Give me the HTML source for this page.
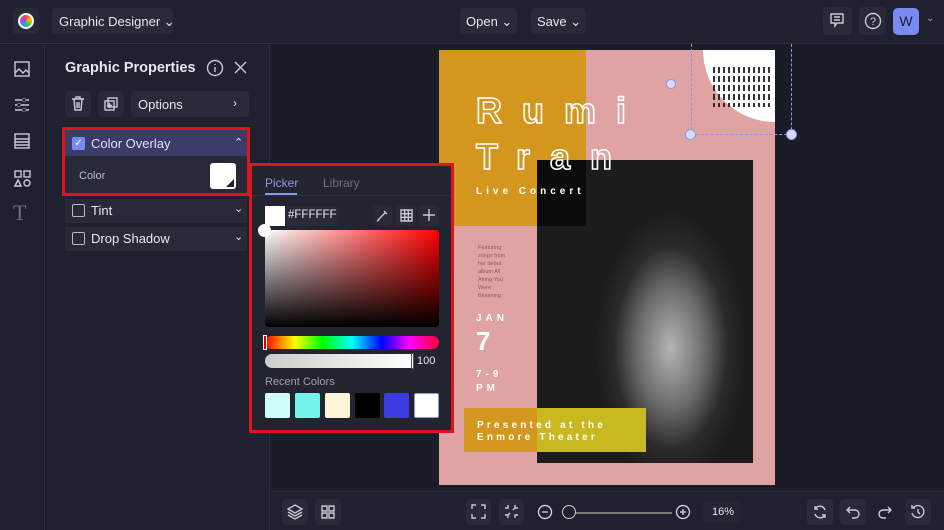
<!DOCTYPE html>
<html><head><style>
*{box-sizing:border-box;margin:0;padding:0}
body{width:944px;height:530px;overflow:hidden;background:#1a1c27;font-family:"Liberation Sans",sans-serif;color:#e6e7ee;position:relative}
.a{position:absolute}
.btn{position:absolute;background:#282a38;border-radius:4px}
.ic{stroke:#c9cad6;fill:none;stroke-width:1.4}
</style></head><body>
<!-- top bar -->
<div class="a" style="left:0;top:0;width:944px;height:44px;background:#1f2130;border-bottom:1px solid #2c2e3c"></div>
<div class="btn" style="left:13px;top:8px;width:26px;height:26px"></div>
<div class="a" style="left:18px;top:13px;width:16px;height:16px;border-radius:50%;background:conic-gradient(#e44,#fb0,#4c4,#29f,#a4e,#e44);border:2px solid #fff"></div>
<div class="btn" style="left:52px;top:8px;width:121px;height:26px"></div>
<div class="a" style="left:59px;top:14px;font-size:13px">Graphic Designer ⌄</div>
<div class="btn" style="left:460px;top:8px;width:57px;height:26px"></div>
<div class="a" style="left:466px;top:14px;font-size:13px">Open ⌄</div>
<div class="btn" style="left:531px;top:8px;width:55px;height:26px"></div>
<div class="a" style="left:537px;top:14px;font-size:13px">Save ⌄</div>
<div class="btn" style="left:823px;top:7px;width:29px;height:28px"></div>
<svg class="a" style="left:829px;top:12px" width="16" height="16"><path class="ic" d="M2 2h12v9H8l-2 3v-3H2z M5 5h6M5 8h6"/></svg>
<div class="btn" style="left:859px;top:7px;width:27px;height:28px"></div>
<svg class="a" style="left:864px;top:12px" width="18" height="18"><circle class="ic" cx="9" cy="9" r="7.5"/><text x="9" y="13" font-size="11" fill="#c9cad6" text-anchor="middle" font-family="Liberation Sans">?</text></svg>
<div class="a" style="left:893px;top:8px;width:26px;height:27px;background:#7a8af5;border-radius:5px;color:#1b1d2b;font-size:14px;text-align:center;line-height:27px">W</div>
<div class="a" style="left:926px;top:13px;font-size:10px;color:#aaa">⌄</div>

<!-- left icon column -->
<div class="a" style="left:0;top:45px;width:45px;height:485px;background:#1f2130;border-right:1px solid #2c2e3c"></div>
<svg class="a" style="left:14px;top:61px" width="16" height="16"><rect class="ic" x="1" y="1" width="14" height="14" stroke="#6d6f80"/><path class="ic" stroke="#6d6f80" d="M1 12l4-4 4 4 3-3 3 3"/></svg>
<svg class="a" style="left:14px;top:97px" width="16" height="16"><path class="ic" stroke="#6d6f80" d="M1 3h14M1 8h14M1 13h14"/><circle cx="10" cy="3" r="1.8" fill="#1f2130" stroke="#6d6f80"/><circle cx="5" cy="8" r="1.8" fill="#1f2130" stroke="#6d6f80"/><circle cx="10" cy="13" r="1.8" fill="#1f2130" stroke="#6d6f80"/></svg>
<svg class="a" style="left:14px;top:133px" width="16" height="16"><rect class="ic" x="1" y="1" width="14" height="14" stroke="#6d6f80"/><path class="ic" stroke="#6d6f80" d="M1 6h14M1 9h14M1 12h14"/></svg>
<svg class="a" style="left:14px;top:170px" width="17" height="17"><rect class="ic" x="1" y="1" width="6" height="6"/><rect class="ic" x="10" y="1" width="6" height="6"/><path class="ic" d="M4 10l3 6H1z"/><circle class="ic" cx="13" cy="13" r="3"/></svg>
<div class="a" style="left:13px;top:200px;font-size:22px;color:#6d6f80;font-family:'Liberation Serif'">T</div>

<!-- panel -->
<div class="a" style="left:46px;top:45px;width:224px;height:485px;background:#1f2130;border-right:1px solid #2c2e3c"></div>
<div class="a" style="left:65px;top:60px;font-size:14.5px;font-weight:bold">Graphic Properties</div>
<svg class="a" style="left:206px;top:59px" width="18" height="18"><circle class="ic" cx="9" cy="9" r="7.5"/><path class="ic" d="M9 8v5M9 5v1"/></svg>
<svg class="a" style="left:234px;top:61px" width="13" height="13"><path class="ic" stroke-width="1.6" d="M1 1l11 11M12 1L1 12"/></svg>
<div class="btn" style="left:65px;top:91px;width:26px;height:26px"></div>
<svg class="a" style="left:71px;top:96px" width="14" height="15"><path class="ic" d="M1 3h12M5 3V1h4v2M3 3l1 11h6l1-11M6 6v6M8 6v6"/></svg>
<div class="btn" style="left:98px;top:91px;width:26px;height:26px"></div>
<svg class="a" style="left:104px;top:97px" width="14" height="14"><rect class="ic" x="4" y="1" width="9" height="9"/><rect class="ic" x="1" y="4" width="9" height="9"/><path class="ic" d="M5.5 6v5M3 8.5h5"/></svg>
<div class="btn" style="left:131px;top:91px;width:118px;height:26px"></div>
<div class="a" style="left:138px;top:97px;font-size:13px">Options</div>
<div class="a" style="left:233px;top:96px;font-size:12px">›</div>

<div class="a" style="left:62px;top:127px;width:188px;height:69px;border:3px solid #e0141a"></div>
<div class="a" style="left:65px;top:130px;width:182px;height:26px;background:#3b3c68"></div>
<div class="a" style="left:65px;top:156px;width:182px;height:37px;background:#282a38"></div>
<div class="a" style="left:72px;top:137px;width:13px;height:13px;background:#7a8af5;border-radius:2px;color:#fff;font-size:10px;text-align:center;line-height:13px">✓</div>
<div class="a" style="left:91px;top:136px;font-size:13px;color:#dfe0f5">Color Overlay</div>
<div class="a" style="left:234px;top:136px;font-size:11px">⌃</div>
<div class="a" style="left:79px;top:170px;font-size:11px;color:#bbbccb">Color</div>
<div class="a" style="left:210px;top:163px;width:26px;height:26px;background:#fff;border-radius:3px"></div>
<div class="a" style="left:226px;top:179px;width:0;height:0;border-left:8px solid transparent;border-bottom:8px solid #222"></div>

<div class="a" style="left:65px;top:199px;width:182px;height:24px;background:#282a38"></div>
<div class="a" style="left:72px;top:204px;width:13px;height:13px;border:1.5px solid #bbb;border-radius:2px"></div>
<div class="a" style="left:91px;top:203px;font-size:13px">Tint</div>
<div class="a" style="left:234px;top:202px;font-size:11px">⌄</div>
<div class="a" style="left:65px;top:227px;width:182px;height:24px;background:#282a38"></div>
<div class="a" style="left:72px;top:232px;width:13px;height:13px;border:1.5px solid #bbb;border-radius:2px"></div>
<div class="a" style="left:91px;top:231px;font-size:13px">Drop Shadow</div>
<div class="a" style="left:234px;top:230px;font-size:11px">⌄</div>

<!-- poster -->
<div class="a" style="left:439px;top:50px;width:336px;height:435px;background:#dfa3a3"></div>
<div class="a" style="left:439px;top:50px;width:147px;height:176px;background:#d3961e"></div>
<div class="a" style="left:703px;top:50px;width:72px;height:72px;background:#fff;border-radius:0 0 0 72px"></div>
<div class="a" style="left:713px;top:67px;width:58px;height:40px;background:repeating-linear-gradient(90deg,#111 0 2px,transparent 2px 5px);opacity:.85;-webkit-mask:repeating-linear-gradient(180deg,#000 0 6px,transparent 6px 9px)"></div>
<div class="a" style="left:537px;top:160px;width:216px;height:303px;background:radial-gradient(ellipse 35% 45% at 62% 62%,#b5b5b5,#6a6a6a 45%,#2a2a2a 75%,#1c1c1c)"></div>
<div class="a" style="left:537px;top:160px;width:49px;height:66px;background:#000;opacity:.6"></div>
<div class="a" style="left:476px;top:90px;font-size:36px;font-weight:bold;color:transparent;-webkit-text-stroke:1.6px #fff;letter-spacing:20px">Rumi</div>
<div class="a" style="left:476px;top:136px;font-size:36px;font-weight:bold;color:transparent;-webkit-text-stroke:1.6px #fff;letter-spacing:20px">Tran</div>
<div class="a" style="left:476px;top:186px;font-size:10px;font-weight:bold;color:#fff;letter-spacing:4px">Live Concert</div>
<div class="a" style="left:478px;top:244px;font-size:5.5px;line-height:8px;color:#8a5a5a;width:36px">Featuring songs from her debut album All Along You Were Blooming</div>
<div class="a" style="left:476px;top:313px;font-size:10px;font-weight:bold;color:#fff;letter-spacing:4px">JAN</div>
<div class="a" style="left:476px;top:326px;font-size:26px;font-weight:bold;color:#fff">7</div>
<div class="a" style="left:476px;top:368px;font-size:10px;font-weight:bold;color:#fff;letter-spacing:4px;line-height:14px">7-9<br>PM</div>
<div class="a" style="left:464px;top:408px;width:182px;height:44px;background:#d3961e"></div>
<div class="a" style="left:537px;top:408px;width:109px;height:44px;background:#c8c020;opacity:.8"></div>
<div class="a" style="left:477px;top:420px;font-size:10px;font-weight:bold;color:#fff;letter-spacing:3.2px;line-height:12px">Presented at the<br>Enmore Theater</div>
<!-- selection -->
<div class="a" style="left:691px;top:44px;width:101px;height:91px;border-right:1.5px dashed #8d97ee;border-bottom:1.5px dashed #8d97ee;border-left:1.5px dashed #8d97ee;border-top:none"></div>
<div class="a" style="left:666px;top:79px;width:10px;height:10px;border-radius:50%;background:#d7dbff;border:1px solid #8d97ee"></div>
<div class="a" style="left:685px;top:129px;width:11px;height:11px;border-radius:50%;background:#d7dbff;border:1px solid #8d97ee"></div>
<div class="a" style="left:786px;top:129px;width:11px;height:11px;border-radius:50%;background:#d7dbff;border:1px solid #8d97ee"></div>

<!-- picker -->
<div class="a" style="left:249px;top:163px;width:205px;height:270px;border:3px solid #e0141a;background:#222430"></div>
<div class="a" style="left:265px;top:176px;font-size:12px;color:#8d97ee">Picker</div>
<div class="a" style="left:265px;top:193px;width:32px;height:2px;background:#8d97ee"></div>
<div class="a" style="left:323px;top:176px;font-size:12px;color:#6f7184">Library</div>
<div class="a" style="left:252px;top:195px;width:199px;height:1px;background:#2f3140"></div>
<div class="a" style="left:265px;top:206px;width:20px;height:20px;background:#fff"></div>
<div class="btn" style="left:285px;top:206px;width:54px;height:20px;background:#282a38"></div>
<div class="a" style="left:288px;top:209px;font-size:11.5px">#FFFFFF</div>
<div class="btn" style="left:373px;top:205px;width:19px;height:21px"></div>
<svg class="a" style="left:376px;top:209px" width="13" height="13"><path class="ic" d="M2 11l7-7M8 2l3 3M1 12l2-1"/></svg>
<div class="btn" style="left:396px;top:205px;width:20px;height:21px"></div>
<svg class="a" style="left:400px;top:209px" width="13" height="13"><path class="ic" d="M1 1h11v11H1zM1 4.7h11M1 8.3h11M4.7 1v11M8.3 1v11"/></svg>
<div class="btn" style="left:419px;top:205px;width:20px;height:21px"></div>
<svg class="a" style="left:422px;top:208px" width="14" height="14"><path class="ic" stroke-width="1.6" d="M7 1v12M1 7h12"/></svg>
<div class="a" style="left:265px;top:230px;width:174px;height:97px;border-radius:3px;background:linear-gradient(to top,#000,rgba(0,0,0,0)),linear-gradient(to right,#fff,#f00)"></div>
<div class="a" style="left:258px;top:224px;width:13px;height:13px;border-radius:50%;background:#fff"></div>
<div class="a" style="left:265px;top:336px;width:174px;height:13px;border-radius:7px;background:linear-gradient(to right,#f00,#ff0 17%,#0f0 33%,#0ff 50%,#00f 67%,#f0f 83%,#f03)"></div>
<div class="a" style="left:263px;top:335px;width:4px;height:15px;border:1px solid #fff;background:#c00"></div>
<div class="a" style="left:265px;top:354px;width:148px;height:14px;border-radius:7px 0 0 7px;background:linear-gradient(to right,#ccc,#fff)"></div>
<div class="a" style="left:411px;top:353px;width:3px;height:16px;background:#fff;border:1px solid #555"></div>
<div class="a" style="left:417px;top:355px;font-size:11px">100</div>
<div class="a" style="left:265px;top:376px;font-size:11px;color:#9ea0b2">Recent Colors</div>
<div class="a" style="left:265px;top:393px;width:25px;height:25px;background:#cffdfa;border-radius:2px"></div>
<div class="a" style="left:295px;top:393px;width:25px;height:25px;background:#74f3ea;border-radius:2px"></div>
<div class="a" style="left:325px;top:393px;width:25px;height:25px;background:#fdf5d8;border-radius:2px"></div>
<div class="a" style="left:355px;top:393px;width:25px;height:25px;background:#000;border-radius:2px"></div>
<div class="a" style="left:384px;top:393px;width:25px;height:25px;background:#3b3be0;border-radius:2px"></div>
<div class="a" style="left:414px;top:393px;width:25px;height:25px;background:#fff;border-radius:2px;border:1px solid #8d97ee"></div>

<!-- bottom bar -->
<div class="a" style="left:271px;top:491px;width:673px;height:39px;background:#1f2130;border-top:1px solid #2c2e3c"></div>
<div class="btn" style="left:282px;top:499px;width:26px;height:26px"></div>
<svg class="a" style="left:287px;top:504px" width="16" height="16"><path class="ic" d="M8 1l7 4-7 4-7-4zM1 8l7 4 7-4M1 11l7 4 7-4"/></svg>
<div class="btn" style="left:315px;top:499px;width:26px;height:26px"></div>
<svg class="a" style="left:321px;top:505px" width="14" height="14"><path class="ic" d="M1 1h5v5H1zM8 1h5v5H8zM1 8h5v5H1zM8 8h5v5H8z"/></svg>
<div class="btn" style="left:466px;top:499px;width:25px;height:26px"></div>
<svg class="a" style="left:471px;top:504px" width="15" height="15"><path class="ic" d="M1 5V1h4M10 1h4v4M14 10v4h-4M5 14H1v-4"/></svg>
<div class="btn" style="left:499px;top:499px;width:25px;height:26px"></div>
<svg class="a" style="left:504px;top:504px" width="15" height="15"><path class="ic" d="M1 4h3V1M11 1v3h3M14 11h-3v3M4 14v-3H1M6 9l-3 3M9 6l3-3"/></svg>
<svg class="a" style="left:537px;top:504px" width="16" height="16"><circle class="ic" cx="8" cy="8" r="6.5"/><path class="ic" d="M5 8h6"/></svg>
<div class="a" style="left:572px;top:512px;width:100px;height:1.5px;background:#777"></div>
<div class="a" style="left:562px;top:505px;width:14px;height:14px;border-radius:50%;border:1.5px solid #ccc;background:#1f2130"></div>
<svg class="a" style="left:675px;top:504px" width="16" height="16"><circle class="ic" cx="8" cy="8" r="6.5"/><path class="ic" d="M5 8h6M8 5v6"/></svg>
<div class="btn" style="left:703px;top:501px;width:37px;height:22px;background:#232533"></div>
<div class="a" style="left:712px;top:506px;font-size:11px">16%</div>
<div class="btn" style="left:807px;top:499px;width:26px;height:26px"></div>
<svg class="a" style="left:812px;top:504px" width="16" height="16"><path class="ic" d="M13 6A5.5 5.5 0 0 0 3 5M3 10a5.5 5.5 0 0 0 10 1M3 2v3h3M13 14v-3h-3"/></svg>
<div class="btn" style="left:840px;top:499px;width:26px;height:26px"></div>
<svg class="a" style="left:845px;top:504px" width="16" height="16"><path class="ic" d="M5 3L2 6l3 3M2 6h8a4 4 0 0 1 0 8H7"/></svg>
<svg class="a" style="left:877px;top:504px" width="16" height="16"><path class="ic" stroke="#555" d="M11 3l3 3-3 3M14 6H6a4 4 0 0 0 0 8h3"/></svg>
<div class="btn" style="left:905px;top:499px;width:26px;height:26px"></div>
<svg class="a" style="left:910px;top:504px" width="16" height="16"><path class="ic" d="M3 4a6 6 0 1 1-1 5M2 1v3h3M8 5v3l2 2"/></svg>
</body></html>
